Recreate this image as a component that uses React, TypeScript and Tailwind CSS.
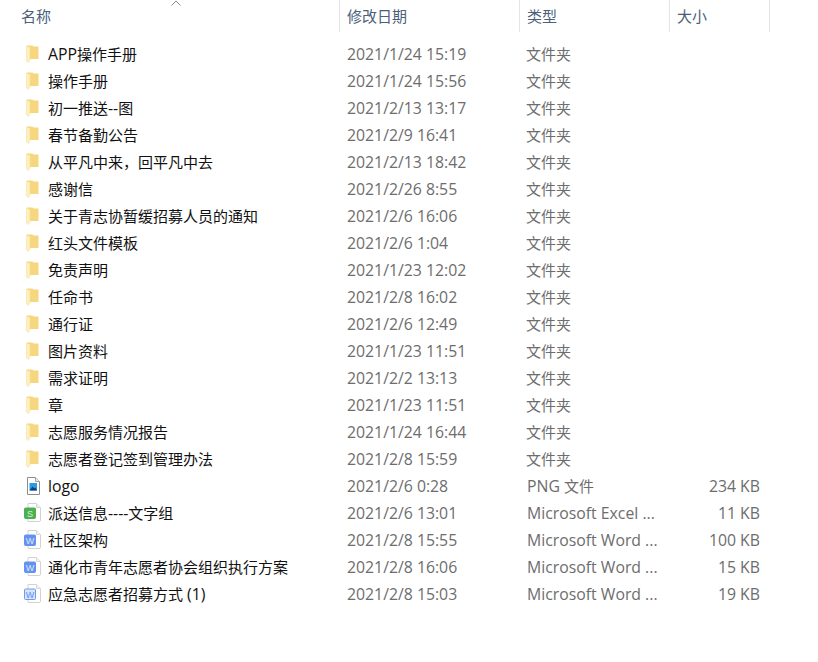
const folderRows = [
  ["APP操作手册", "2021/1/24 15:19"],
  ["操作手册", "2021/1/24 15:56"],
  ["初一推送--图", "2021/2/13 13:17"],
  ["春节备勤公告", "2021/2/9 16:41"],
  ["从平凡中来，回平凡中去", "2021/2/13 18:42"],
  ["感谢信", "2021/2/26 8:55"],
  ["关于青志协暂缓招募人员的通知", "2021/2/6 16:06"],
  ["红头文件模板", "2021/2/6 1:04"],
  ["免责声明", "2021/1/23 12:02"],
  ["任命书", "2021/2/8 16:02"],
  ["通行证", "2021/2/6 12:49"],
  ["图片资料", "2021/1/23 11:51"],
  ["需求证明", "2021/2/2 13:13"],
  ["章", "2021/1/23 11:51"],
  ["志愿服务情况报告", "2021/1/24 16:44"],
  ["志愿者登记签到管理办法", "2021/2/8 15:59"],
];

const fileRows = [
  { name: "logo", date: "2021/2/6 0:28", type: "PNG 文件", size: "234 KB", icon: "png" },
  { name: "派送信息----文字组", date: "2021/2/6 13:01", type: "Microsoft Excel ...", size: "11 KB", icon: "xls" },
  { name: "社区架构", date: "2021/2/8 15:55", type: "Microsoft Word ...", size: "100 KB", icon: "doc" },
  { name: "通化市青年志愿者协会组织执行方案", date: "2021/2/8 16:06", type: "Microsoft Word ...", size: "15 KB", icon: "doc" },
  { name: "应急志愿者招募方式 (1)", date: "2021/2/8 15:03", type: "Microsoft Word ...", size: "19 KB", icon: "docx" },
];

// latin runs sit a bit larger than the CJK ones, like the system font does
const Mixed = ({ text }: { text: string }) => (
  <>
    {text.split(/([\x20-\x7e]+)/).map((part, i) =>
      /[\x20-\x7e]/.test(part) ? (
        <span key={i} className="text-[15.8px]">
          {part}
        </span>
      ) : (
        <span key={i}>{part}</span>
      ),
    )}
  </>
);

const FolderIcon = () => (
  <svg width="13" height="18" viewBox="0 0 13 18" className="ml-[26px] shrink-0">
    <path d="M1 0.5h5.5l1 1h5V14H1z" fill="#f6d67f" />
    <path d="M0.5 1l3.5 1.5v12l-1.5 3-2-1.5z" fill="#fdf0ba" stroke="#f4dc98" strokeWidth="0.5" />
  </svg>
);

const FileIcon = ({ kind }: { kind: string }) => {
  if (kind === "png") {
    return (
      <svg width="14" height="18" viewBox="0 0 14 18" className="ml-[26px] shrink-0">
        <path d="M1.5.5h8l4 4v13h-12z" fill="#fff" stroke="#8d8d8d" />
        <path d="M9.5.5v4h4" fill="#eee" stroke="#a0a0a0" />
        <rect x="3.5" y="6" width="7.5" height="7.5" fill="#2a9be6" />
        <path d="M3.5 13.5l3-4 2 2 1-1 1.5 3z" fill="#123f7c" />
      </svg>
    );
  }
  const colors: Record<string, { bg: string; letter: string; fg: string }> = {
    xls: { bg: "#4caf50", letter: "S", fg: "#d9f0da" },
    doc: { bg: "#6492ee", letter: "W", fg: "#dbe6fc" },
    docx: { bg: "#d6e4fc", letter: "W", fg: "#5b8def" },
  };
  const c = colors[kind];
  return (
    <svg width="18" height="19" viewBox="0 0 18 19" className="ml-[24px] shrink-0">
      <path d="M4 .5h8.5l4 4V17a1.5 1.5 0 0 1-1.5 1.5H4z" fill="#fff" stroke="#d2d2d2" />
      <path d="M12.5.5v4h4" fill="#f2f2f2" stroke="#d8d8d8" />
      <rect x="0.5" y="5" width="11" height="10.5" rx="1" fill={c.bg} stroke={kind === "docx" ? "#6f9bef" : c.bg} />
      <text x="6" y="13.5" textAnchor="middle" fontSize="9" fontFamily='"Liberation Sans", sans-serif' fill={c.fg}>
        {c.letter}
      </text>
    </svg>
  );
};

const HeaderCell = ({ label, width }: { label: string; width: string }) => (
  <div className={`${width} h-[32px] border-r border-[#e5e5e5] pl-[7px] pt-[5px] text-[#4c607a]`}>{label}</div>
);

const Row = ({
  icon,
  name,
  date,
  type,
  size,
}: {
  icon: React.ReactNode;
  name: string;
  date: string;
  type: string;
  size?: string;
}) => (
  <div className="flex h-[27px] items-center whitespace-nowrap">
    <div className="flex w-[340px] items-center">
      <div className="flex w-[48px] items-center">{icon}</div>
      <span className="text-[#111111]">
        <Mixed text={name} />
      </span>
    </div>
    <div className="w-[180px] pl-[7px] text-[15.8px] text-[#6d6d6d]">{date}</div>
    <div className={`w-[150px] text-[#6d6d6d] ${size ? "pl-[7px]" : "pl-[6px]"}`}>
      <Mixed text={type} />
    </div>
    <div className="w-[90px] text-right text-[15.8px] text-[#6d6d6d]">{size}</div>
  </div>
);

export default function App() {
  return (
    <div className="relative h-[662px] w-[818px] overflow-hidden bg-white font-['Open_Sans','Noto_Sans_CJK_SC',sans-serif] text-[15px] leading-[22px]">
      <div className="flex">
        <div className="relative h-[32px] w-[340px] border-r border-[#e5e5e5] pl-[21px] pt-[5px] text-[#4c607a]">
          名称
          <svg width="10" height="6" viewBox="0 0 10 6" className="absolute left-[171px] top-0">
            <path d="M0.5 5.5L5 1l4.5 4.5" fill="none" stroke="#8a8a8a" />
          </svg>
        </div>
        <HeaderCell label="修改日期" width="w-[180px]" />
        <HeaderCell label="类型" width="w-[150px]" />
        <HeaderCell label="大小" width="w-[100px]" />
      </div>
      <div className="pt-[8px]">
        {folderRows.map(([name, date]) => (
          <Row key={name} icon={<FolderIcon />} name={name} date={date} type="文件夹" />
        ))}
        {fileRows.map((f) => (
          <Row key={f.name} icon={<FileIcon kind={f.icon} />} name={f.name} date={f.date} type={f.type} size={f.size} />
        ))}
      </div>
    </div>
  );
}
